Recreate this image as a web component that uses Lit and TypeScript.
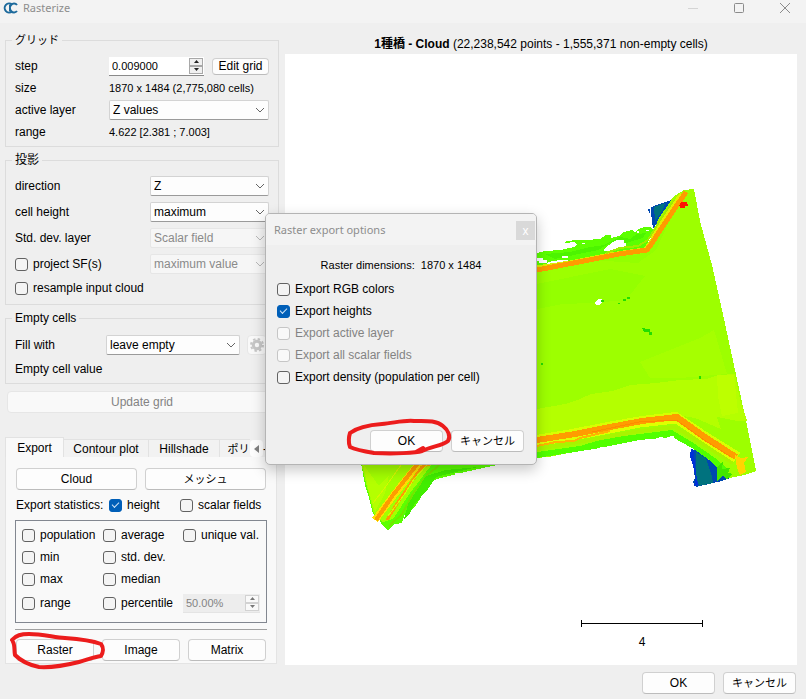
import { LitElement, html, css, svg } from "lit";
import { customElement, property } from "lit/decorators.js";

const controls = css`
  * { box-sizing: border-box; }
  button, input, select { font: inherit; color: inherit; margin: 0; }
  button {
    height: 22px; padding: 0; background: #fdfdfd; border: 1px solid #d0d0d0;
    border-bottom-color: #bcbcbc; border-radius: 4px; white-space: nowrap;
  }
  button:disabled { color: #838383; background: #f9f9f9; border-color: #e6e6e6; }
  select {
    appearance: none; width: 100%; height: 20px; padding: 0 20px 0 3px; border: 1px solid #d3d3d3;
    border-bottom-color: #9a9a9a; border-radius: 2px; color: #000; opacity: 1;
    background: #fdfdfd url("data:image/svg+xml,%3Csvg xmlns='http://www.w3.org/2000/svg' width='10' height='6'%3E%3Cpath d='M1 1l4 4 4-4' fill='none' stroke='%23666'/%3E%3C/svg%3E") no-repeat right 3px center;
  }
  select:disabled {
    color: #8a8a8a; border-color: #e6e6e6; background-color: #f6f6f6;
    background-image: url("data:image/svg+xml,%3Csvg xmlns='http://www.w3.org/2000/svg' width='10' height='6'%3E%3Cpath d='M1 1l4 4 4-4' fill='none' stroke='%23b8b8b8'/%3E%3C/svg%3E");
  }
`;

@customElement("check-option")
export class CheckOption extends LitElement {
  @property() label = "";
  @property({ type: Boolean }) checked = false;
  @property({ type: Boolean }) disabled = false;

  static styles = css`
    :host { display: block; line-height: 16px; }
    .option { display: flex; align-items: center; gap: 5px; white-space: nowrap; }
    .box {
      appearance: none; flex: none; box-sizing: border-box; width: 13px; height: 13px; margin: 0;
      border: 1px solid #626262; border-radius: 3px; background: #f4f4f4;
      display: flex; align-items: center; justify-content: center;
    }
    .box:checked { background: #005fb8; border-color: #005fb8; }
    .box:checked::after {
      content: ""; width: 6px; height: 3px; margin-bottom: 2px;
      border: solid #cfe4f7; border-width: 0 0 1px 1px; transform: rotate(-45deg);
    }
    .box:disabled { border-color: #c6c6c6; background: #f9f9f9; }
    .off { color: #838383; }
  `;

  render() {
    return html`<label class="option ${this.disabled ? "off" : ""}">
      <input class="box" type="checkbox" .checked=${this.checked} ?disabled=${this.disabled}>
      ${this.label}
    </label>`;
  }
}

@customElement("spin-field")
export class SpinField extends LitElement {
  @property() value = "";
  @property() name = "";
  @property({ type: Boolean }) disabled = false;

  static styles = [controls, css`
    :host { display: block; min-width: 0; }
    .field { display: flex; align-items: center; height: 19px; background: #fff; border-bottom: 1px solid #8a8a8a; }
    .text { flex: 1; width: 0; min-width: 0; border: 0; padding: 0 0 0 3px; background: transparent; outline: 0; height: 16px; font-size: 11px; }
    .steps { flex: none; display: flex; flex-direction: column; width: 14px; height: 16px; margin-right: 1px; }
    .step { height: 8px; border: 1px solid #a8a8a8; border-radius: 0; background: #f0f0f0; display: grid; place-items: center; }
    .arrow { width: 5px; height: 3px; fill: #222; display: block; }
    .off { background: #ededed; border-bottom-color: #e4e4e4; color: #838383; }
    .off .step { border-color: #d2d2d2; }
    .off .arrow { fill: #777; }
  `];

  render() {
    return html`<div class="field ${this.disabled ? "off" : ""}">
      <input class="text" aria-label=${this.name} .value=${this.value} ?disabled=${this.disabled}>
      <span class="steps">
        <button class="step" aria-label="Increase" ?disabled=${this.disabled}><svg class="arrow" viewBox="0 0 5 3"><path d="M0 3L2.500 0L5 3Z"/></svg></button>
        <button class="step" aria-label="Decrease" ?disabled=${this.disabled}><svg class="arrow" viewBox="0 0 5 3"><path d="M0 0L2.500 3L5 0Z"/></svg></button>
      </span>
    </div>`;
  }
}

@customElement("raster-view")
export class RasterView extends LitElement {
  static styles = css`
    :host { display: block; background: #fff; }
    .map { display: block; width: 100%; height: 100%; }
    .cells { shape-rendering: crispEdges; }
    .line { fill: none; }
    .scale { stroke: #000; shape-rendering: crispEdges; fill: none; }
    .num { font-size: 12px; text-anchor: middle; }
  `;

  private stroke(d: string, color: string, width: number) {
    return svg`<path class="line" d=${d} stroke=${color} stroke-width=${width}/>`;
  }

  render() {
    return html`<svg class="map" viewBox="285 54 512 611" role="img" aria-label="Height map of the cloud">
      <g class="cells">
        <path fill="#0048b0" d="M651 207L654 206L671 200L672 199L668 208L662 215L653 229L652 220L651 214ZM648 209h2v4h-1zM691 449L690 456L693 464L695 478L693 482L696 487L722 481L730 478L722 466L706 454Z"/>
        <path fill="#00727e" d="M654 207L665 203L663 210L655 221ZM696 452L706 458L712 476L713 483L699 486L696 476Z"/>
        <path fill="#0030d8" d="M691 449L694 452L695 466L698 485L694 486L696 478L692 462L690 456Z"/>
        <path fill="#5cff00" d="M537 253L545 251L561 250L569 248L575 247L577 244L574 242L565 243L566 241L578 240L586 240L600 239L606 235L611 235L611 238L619 236L624 232L632 230L635 233L638 229L644 227L650 227L654 231L648 240L647 249L537 270Z"/>
        <path fill="#4cf400" d="M545 254L570 252L590 247L604 245L620 237L630 239L637 234L646 233L643 238L626 243L610 243L598 250L555 259Z"/>
        <path fill="#fff" d="M537 258h6v2h4v3h-8v-2h-2zM548 262l12-2h8v2l-14 3h-8zM604 249l9-7 4-2h7v3h2v4l-18 4h-4zM562 256h6v2h-6zM637 231h2v2h-2zM582 243h3v1h-3z"/>
        <path fill="#9dff00" d="M537 270L646 251L653 232L659 218L668 205L673 197L684 190L694 189L700 221L712 265L724 319L735 370L748 430L756 471L744 475L730 478L714 464L700 453L681 440L671 435L640 439L616 444L594 449L572 452L555 456L537 458Z"/>
        <path fill="#94ff00" d="M537 284L610 269L645 276L626 300L592 303L562 304L537 309ZM590 260L641 254L670 220L656 250L638 263Z"/>
        <path fill="#a6ff00" d="M640 362L700 338L714 330L727 374L680 378L650 378Z"/>
        <path fill="#b4ff00" d="M537 409L565 404L580 399L591 394L612 391L631 385L656 383L680 380L706 379L719 375L735 374L740 399L747 421L738 421L717 417L721 429L695 418L677 415L642 420L590 430L537 437Z"/>
        <path fill="#bdff00" d="M717 375h17l4 38-16 3-4-20z"/>
        <path fill="#51ff00" d="M537 452L580 446L607 438L640 434L672 430L692 442L715 458L728 469L722 473L711 461L692 448L672 437L640 440L594 449L537 458Z"/>
        ${this.stroke("M537 449L590 440L640 431L675 427L708 447L733 463", "#a8f400", 4)}
        ${this.stroke("M537 444L590 435L640 425L676 421L706 441L735 460", "#e0ff00", 5)}
        ${this.stroke("M537 446L556 442L574 441L580 438L610 431", "#ffb400", 2)}
        ${this.stroke("M537 439L572 433L608 426L642 420L676 416L704 435L738 456", "#d8ff00", 8)}
        ${this.stroke("M537 440L575 434L610 427L642 421L677 417L705 437L736 457", "#ff9c00", 6)}
        ${this.stroke("M592 432L639 422L676 420L704 440L731 457", "#ff8a00", 1)}
        <path fill="#ffd500" d="M735 455L741 458L748 457L744 463L746 472L740 475L737 468Z"/>
        <path fill="#42e700" d="M717 467l6-5-1 7 8-1-2 5 5 1-6 5-4-3-6 5z"/>
        ${this.stroke("M653 238L662 225L673 207L683 195", "#e4ef00", 7)}
        ${this.stroke("M537 267L570 262L610 254L630 251L645 249L653 238", "#d9f000", 3)}
        ${this.stroke("M537 270L563 265L594 259L619 254L647 250L652 243L661 229L671 214L686 192", "#ff9b00", 5)}
        ${this.stroke("M606 253L620 248L638 246L648 240L662 217L674 200", "#a0ed00", 2)}
        <path fill="#ff1400" d="M681 202h6v2h1v2h-3v2h-5v-2h-1z"/>
        <path fill="#fff" d="M595 302l3-3h4v3l-2 3h-4zM646 230h3v1h-3z"/>
        <path fill="#22de00" d="M601 300h3v2h-3zM623 299h4v-2h3v2h-4v2h-3zM642 328h3v1h5v3h2v3h-3v-3h-5zM541 363h2v2h-2zM699 376h2v3h-2zM618 303h2v1h-2z"/>
        <path fill="#5bff00" d="M361 463L365 485L369 498L373 514L377 516L383 526L388 530L395 524L402 523L405 513L414 508L420 499L430 481L445 477L465 472L506 463Z"/>
        <path fill="#a3ff00" d="M361 463H433L410 493L393 519L383 522L374 514Z"/>
        <path fill="#b4ff00" d="M363 464l16 22 10-11-4 18-10 19-6-20z"/>
        ${this.stroke("M442 463L426 476L414 492L402 514L389 526", "#73e500", 2)}
        ${this.stroke("M420 462L408 477L394 495L375 520", "#ffe000", 7)}
        ${this.stroke("M419 462L408 476L393 495L376 520", "#ff9c00", 4)}
        ${this.stroke("M435 462L422 467L412 481L398 502L387 520", "#ff9c00", 3)}
        ${this.stroke("M427 465L414 479L404 495L388 516", "#d3ff00", 1)}
        ${this.stroke("M373 503L384 489L401 465", "#d5f700", 1)}
        <path fill="#41ed00" d="M426 476l20-6 32-3-22 5-20 5-8 12-14 16-5 10-5 4 4-15z"/>
        <path fill="#fff" d="M556 455h5v2h-5zM600 447h5v2h-5zM621 444h5v1h-5zM659 437h4v2h-4zM670 436h4v2h-4zM455 473h8v1h-8zM472 470h4v1h-4z"/>
      </g>
      <path class="scale" d="M581 623.500H703M581.500 620V627M702.500 620V627"/>
      <text class="num" x="642" y="646">4</text>
    </svg>`;
  }
}

@customElement("app-root")
export class AppRoot extends LitElement {
  static styles = [controls, css`
    :host {
      display: block; position: relative; color: #000; background: #efefef;
      font: 12px/16px "Liberation Sans", "Noto Sans CJK JP", sans-serif;
    }
    .window { display: flex; flex-direction: column; min-height: 100vh; }
    .titlebar { display: flex; align-items: center; gap: 4px; height: 23px; padding: 0 15px 8px 3px; background: #f3f3f3; color: #8d8d8d; }
    .title { font: 11px/16px "Noto Sans", sans-serif; flex: 1; font-weight: 400; margin: 0; }
    .logo { width: 16px; height: 12px; }
    .caption { display: flex; gap: 34px; }
    .wbtn { border: 0; background: none; width: 12px; height: 12px; display: block; }
    .glyph { width: 12px; height: 12px; display: block; fill: none; stroke: #8b8b8b; }
    .faint { stroke: #d4d4d4; }
    .body { flex: 1; display: flex; gap: 6px; padding: 9px 9px 0 5px; }
    .side { flex: none; width: 274px; }
    .main { flex: 1; min-width: 0; display: flex; flex-direction: column; }
    .heading { font-size: 12px; font-weight: 400; line-height: 16px; margin: 4px 0 2px; text-align: center; white-space: nowrap; }
    .view { flex: 1; min-height: 0; }
    .footer { display: flex; justify-content: flex-end; gap: 8px; padding: 7px 10px 5px; }
    .dlgbtn { width: 73px; }
    .kana, .value { font-size: 11px; }

    .group { border: 1px solid #dcdcdc; margin: 0 0 5px; padding: 5px 9px 5px 8px; min-width: 0; }
    .grid { padding-top: 7px; padding-bottom: 3px; }
    .empty { padding-top: 6px; padding-bottom: 3px; margin-bottom: 7px; }
    .legend { padding: 0 3px; margin-left: -2px; height: 16px; }
    .grid .legend { font-size: 11px; }
    .row { display: grid; align-items: center; height: 22px; white-space: nowrap; padding-left: 1px; }
    .tall { height: 26px; }
    .c1 { grid-template-columns: 94px 1fr; }
    .c2 { grid-template-columns: 135px 1fr; }
    .c3 { grid-template-columns: 91px 134px 1fr; }
    .stepper { display: grid; grid-template-columns: 95px 1fr; gap: 8px; align-items: center; }
    .small { height: 17px; line-height: 14px; }
    .gear { margin-left: 7px; width: 20px; height: 20px; display: grid; place-items: center; }
    .gearicon { width: 14px; height: 14px; fill: none; stroke: #c6c6c6; }
    .update { display: block; width: 270px; margin: 0 auto; }

    .tabs { display: flex; align-items: flex-end; margin-top: 24px; width: 272px; overflow: hidden; }
    .tab { height: 18px; border: 1px solid #e2e2e2; border-left: 0; border-bottom: 0; border-radius: 0; background: #f2f2f2; flex: none; }
    .tab.on { height: 20px; background: #f9f9f9; border-left: 1px solid #e2e2e2; }
    .t1 { width: 59px; }
    .t2 { width: 85px; }
    .t3 { width: 71px; }
    .t4 { width: 30px; padding-left: 7px; border-right: 0; }
    .scroll { width: 13px; height: 17px; border: 0; background: #fdfdfd; color: #777; display: grid; place-items: center; }
    .left { width: 5px; height: 8px; fill: #808080; }
    .panel { width: 272px; border: 1px solid #e4e4e4; border-top: 0; background: #f9f9f9; padding: 11px 9px 2px; }
    .pair { display: grid; grid-template-columns: 1fr 1fr; gap: 8px; padding: 0 1px; }
    .stats { display: grid; grid-template-columns: 93px 71px 1fr; padding: 7px 1px; white-space: nowrap; }
    .frame { border: 1px solid #828790; padding: 3px 6px; display: grid; grid-template-columns: 81px 80px 77px; grid-auto-rows: 22px; align-items: center; margin-bottom: 6px; height: 103px; }
    .low { margin-top: 4px; }
    .rule { border: 0; border-top: 1px solid #a0a0a0; margin: 0 0 9px; }
    .trio { display: grid; grid-template-columns: 1fr 1fr 1fr; gap: 8px; padding: 0 1px; }
    .marked { position: relative; display: grid; }
    .mark { position: absolute; fill: none; stroke: #ec1c1c; stroke-width: 4; stroke-linecap: round; stroke-linejoin: round; pointer-events: none; }
    .mark-raster { left: -7px; top: -8px; width: 96px; height: 40px; }
    .mark-ok { left: -26px; top: -14px; width: 110px; height: 44px; }

    .dialog {
      position: absolute; left: 265px; top: 213px; width: 272px; margin: 0; padding: 0; color: #000;
      border: 1px solid #b4b4b4; border-radius: 5px; background: #efefef; overflow: visible;
      box-shadow: 0 5px 14px rgba(0, 0, 0, 0.22);
    }
    .dlgbar { display: flex; align-items: center; height: 31px; padding: 0 1px 0 8px; background: #f3f3f3; color: #8d8d8d; border-radius: 4px 4px 0 0; }
    .close { width: 19px; height: 19px; border: 0; border-radius: 0; background: #d9d9d9; color: #fff; margin-top: 2px; }
    .dims { text-align: center; margin: 12px 0 5px; white-space: pre; }
    .options { display: grid; grid-auto-rows: 22px; align-items: center; padding: 0 11px; }
    .actions { display: flex; justify-content: flex-end; gap: 8px; padding: 42px 12px 12px; }
  `];

  private choice(label: string, value: string, disabled = false) {
    return html`<label class="row tall c2">${label}
      <select ?disabled=${disabled}><option>${value}</option></select></label>`;
  }

  private group(title: string, kind: string, content: unknown) {
    return html`<fieldset class="group ${kind}"><legend class="legend">${title}</legend>${content}</fieldset>`;
  }

  render() {
    return html`
      <div class="window">
        <header class="titlebar">
          <svg class="logo" viewBox="0 0 16 12" fill="none" stroke="#1d6a9c" stroke-width="2"><path d="M9 2.500A4.500 4.500 0 1 0 9 9.500"/><path d="M14 3A4 4.500 0 1 0 14 9M7 2.500V9.500"/></svg>
          <h1 class="title">Rasterize</h1>
          <div class="caption">
            <button class="wbtn" aria-label="Minimize"><svg class="glyph faint" viewBox="0 0 12 12"><path d="M1 6.500h10"/></svg></button>
            <button class="wbtn" aria-label="Maximize"><svg class="glyph" viewBox="0 0 12 12"><rect x="1.500" y="1.500" width="9" height="9" rx="1"/></svg></button>
            <button class="wbtn" aria-label="Close"><svg class="glyph" viewBox="0 0 12 12"><path d="M1 1l10 10M11 1L1 11"/></svg></button>
          </div>
        </header>
        <div class="body">
          <aside class="side">
            ${this.group("グリッド", "grid", html`
              <div class="row c1"><span>step</span>
                <div class="stepper"><spin-field name="step" value="0.009000"></spin-field><button class="small">Edit grid</button></div>
              </div>
              <div class="row c1"><span>size</span><span class="value">1870 x 1484 (2,775,080 cells)</span></div>
              <label class="row c1">active layer<select><option>Z values</option></select></label>
              <div class="row c1"><span>range</span><span class="value">4.622 [2.381 ; 7.003]</span></div>`)}
            ${this.group("投影", "", html`
              ${this.choice("direction", "Z")}
              ${this.choice("cell height", "maximum")}
              ${this.choice("Std. dev. layer", "Scalar field", true)}
              <div class="row tall c2"><check-option label="project SF(s)"></check-option>
                <select disabled aria-label="SF projection"><option>maximum value</option></select></div>
              <div class="row"><check-option label="resample input cloud"></check-option></div>`)}
            ${this.group("Empty cells", "empty", html`
              <div class="row tall c3"><label for="fill">Fill with</label>
                <select id="fill"><option>leave empty</option></select>
                <button class="gear" disabled aria-label="Fill settings">
                  <svg class="gearicon" viewBox="0 0 14 14"><circle cx="7" cy="7" r="6" stroke-width="2" stroke-dasharray="2.400 2.312"/><circle cx="7" cy="7" r="3.700" stroke-width="3"/></svg>
                </button></div>
              <div class="row">Empty cell value</div>`)}
            <button class="update" disabled>Update grid</button>
            <div class="tabs" role="tablist">
              <button class="tab on t1" role="tab" aria-selected="true">Export</button>
              <button class="tab t2" role="tab">Contour plot</button>
              <button class="tab t3" role="tab">Hillshade</button>
              <button class="tab t4 kana" role="tab">ポリ</button>
              <button class="scroll" aria-label="Previous tabs"><svg class="left" viewBox="0 0 5 8"><path d="M5 0V8L0 4Z"/></svg></button>
              <span>-</span>
            </div>
            <section class="panel">
              <div class="pair"><button>Cloud</button><button class="kana">メッシュ</button></div>
              <div class="stats"><span>Export statistics:</span>
                <check-option label="height" checked></check-option><check-option label="scalar fields"></check-option></div>
              <div class="frame">
                ${["population", "average", "unique val.", "min", "std. dev.", "", "max", "median", ""].map(
                  (t) => (t ? html`<check-option label=${t}></check-option>` : html`<span></span>`))}
                <check-option class="low" label="range"></check-option>
                <check-option class="low" label="percentile"></check-option>
                <spin-field class="low" name="percentile" value="50.00%" disabled></spin-field>
              </div>
              <hr class="rule">
              <div class="trio">
                <div class="marked"><button>Raster</button>
                  <svg class="mark mark-raster" viewBox="0 0 96 40"><path d="M3 9C7 4 12 3 20 3C33 3 44 6 56 7C70 8 84 10 92 13C95 17 94 22 92 25C84 26 78 29 70 31C58 34 45 37 30 36C20 34 12 30 6 24C5 19 6 14 4 11"/></svg></div>
                <button>Image</button><button>Matrix</button>
              </div>
            </section>
          </aside>
          <main class="main">
            <h2 class="heading"><b>1種橋 - Cloud</b> (22,238,542 points - 1,555,371 non-empty cells)</h2>
            <raster-view class="view"></raster-view>
          </main>
        </div>
        <footer class="footer"><button class="dlgbtn">OK</button><button class="dlgbtn kana">キャンセル</button></footer>
      </div>
      <dialog class="dialog" open aria-label="Raster export options">
        <header class="dlgbar"><h2 class="title">Raster export options</h2><button class="close" aria-label="Close">x</button></header>
        <p class="dims value">Raster dimensions:  1870 x 1484</p>
        <div class="options">
          <check-option label="Export RGB colors"></check-option>
          <check-option label="Export heights" checked></check-option>
          <check-option label="Export active layer" disabled></check-option>
          <check-option label="Export all scalar fields" disabled></check-option>
          <check-option label="Export density (population per cell)"></check-option>
        </div>
        <div class="actions">
          <div class="marked"><button class="dlgbtn">OK</button>
            <svg class="mark mark-ok" viewBox="0 0 110 44"><path d="M6 17C14 11 24 9 38 8C50 7 60 4 70 5C82 5 92 4 99 10C104 14 107 20 104 25C98 30 88 30 78 35C72 37 50 38 30 37C18 35 10 33 6 31C4 27 5 20 6 17M72 36L79 32"/></svg></div>
          <button class="dlgbtn kana">キャンセル</button>
        </div>
      </dialog>`;
  }
}
